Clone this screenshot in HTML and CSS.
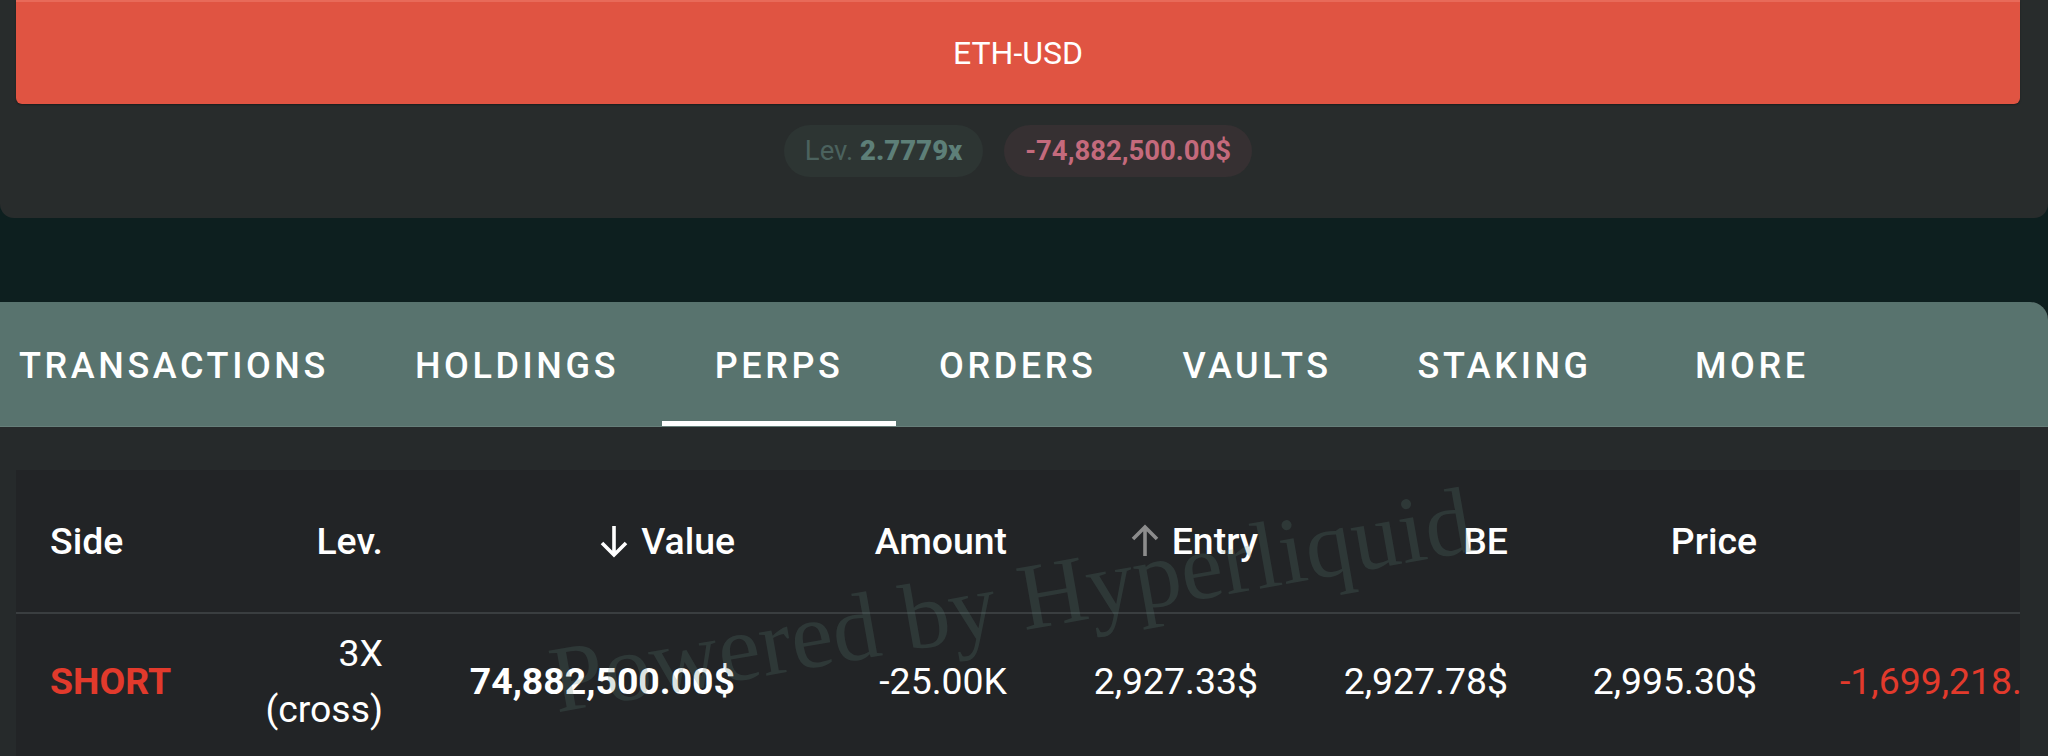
FILE: index.html
```html
<!DOCTYPE html>
<html lang="en">
<head>
<meta charset="utf-8">
<title>Perps</title>
<link rel="stylesheet" href="styles.css">
</head>
<body>
<section class="top-card">
  <button class="eth-btn">ETH-USD</button>
  <div class="pills">
    <span class="pill pill-lev"><span class="lev-label">Lev.</span> <b>2.7779x</b></span>
    <span class="pill pill-val">-74,882,500.00$</span>
  </div>
</section>

<section class="panel">
  <nav class="tabs">
    <div class="tab">TRANSACTIONS</div>
    <div class="tab">HOLDINGS</div>
    <div class="tab active">PERPS</div>
    <div class="tab">ORDERS</div>
    <div class="tab">VAULTS</div>
    <div class="tab">STAKING</div>
    <div class="tab">MORE</div>
  </nav>

  <div class="table-card">
    <div class="row head">
      <div class="cell left">Side</div>
      <div class="cell">Lev.</div>
      <div class="cell"><svg class="arrow" viewBox="0 0 34 36" width="34" height="36"><path d="M17 3 V32 M5 20 L17 32 L29 20" fill="none" stroke="#ffffff" stroke-width="3.6"/></svg>Value</div>
      <div class="cell">Amount</div>
      <div class="cell"><svg class="arrow" viewBox="0 0 34 36" width="34" height="36"><path d="M17 33 V4 M5 16 L17 4 L29 16" fill="none" stroke="#8c8c8c" stroke-width="3.6"/></svg>Entry</div>
      <div class="cell">BE</div>
      <div class="cell">Price</div>
      <div class="cell">PnL</div>
    </div>
    <div class="row data">
      <div class="cell left short">SHORT</div>
      <div class="cell lev">3X<br>(cross)</div>
      <div class="cell strong">74,882,500.00$</div>
      <div class="cell">-25.00K</div>
      <div class="cell">2,927.33$</div>
      <div class="cell">2,927.78$</div>
      <div class="cell">2,995.30$</div>
      <div class="cell neg">-1,699,218.75$</div>
    </div>
    <div class="watermark">Powered by Hyperliquid</div>
  </div>
</section>
</body>
</html>
```

FILE: styles.css
```css
* { box-sizing: border-box; }

html, body {
  margin: 0;
  padding: 0;
}

body {
  width: 2048px;
  height: 756px;
  overflow: hidden;
  background: #0d1f1f;
  font-family: Roboto, "Noto Sans", "Liberation Sans", sans-serif;
  color: #ffffff;
}

.top-card {
  background: #282c2c;
  padding: 0 28px 41px 16px;
  border-radius: 0 0 14px 14px;
  height: 218px;
}

.eth-btn {
  display: flex;
  align-items: center;
  justify-content: center;
  width: 100%;
  height: 104px;
  border: 0;
  border-top: 2px solid #e86a59;
  border-radius: 0 0 6px 6px;
  background: #e05442;
  color: #ffffff;
  font-family: Roboto, "Liberation Sans", sans-serif;
  font-size: 32px;
  font-weight: 400;
  padding: 0;
  box-shadow: 0 1px 2px rgba(0,0,0,0.35);
}

.pills {
  display: flex;
  justify-content: center;
  gap: 21px;
  margin-top: 21px;
}

.pill {
  height: 52px;
  line-height: 52px;
  padding: 0 21px;
  border-radius: 26px;
  font-size: 27.5px;
  font-weight: 700;
  white-space: nowrap;
}

.pill-lev {
  background: #2d3533;
  color: #5d7f78;
}

.pill-lev .lev-label {
  font-weight: 400;
  color: #4b625e;
}

.pill-val {
  background: #363032;
  color: #c46a7c;
}

.panel {
  margin-top: 84px;
  background: #262a2b;
  border-top-right-radius: 18px;
  overflow: hidden;
  height: 454px;
}

.tabs {
  display: flex;
  height: 125px;
  background: #58736e;
  white-space: nowrap;
  overflow: hidden;
  border-bottom: 1px solid #667f7a;
}

.tabs .tab:first-child {
  margin-left: -24px;
}

.tab {
  flex: none;
  position: relative;
  min-width: 234px;
  padding: 4px 43px 0;
  display: flex;
  align-items: center;
  justify-content: center;
  font-size: 36px;
  font-weight: 500;
  letter-spacing: 3.6px;
  color: #ffffff;
}

.tab.active::after {
  content: "";
  position: absolute;
  left: 0;
  right: 0;
  bottom: 0;
  height: 5px;
  background: #ffffff;
}

.table-card {
  position: relative;
  margin: 43px 28px 0 16px;
  background: #222426;
  height: 300px;
  overflow: hidden;
}

.row {
  display: grid;
  grid-template-columns: 150px 183px 352px 272px 251px 250px 249px 328px;
  padding-left: 34px;
  position: relative;
  z-index: 1;
}

.row.head {
  height: 144px;
  align-items: center;
  border-bottom: 2px solid #3a3e40;
  font-size: 37.4px;
  font-weight: 500;
}

.row.data {
  padding-top: 11px;
  align-items: center;
  font-size: 37.4px;
  font-weight: 400;
  line-height: 56px;
}

.cell {
  text-align: right;
  white-space: nowrap;
  display: flex;
  align-items: center;
  justify-content: flex-end;
}

.cell.left {
  justify-content: flex-start;
}

.cell.lev {
  display: block;
  text-align: right;
}

.arrow {
  margin-right: 10px;
}

.short {
  color: #e23a2c;
  font-weight: 700;
}

.strong {
  font-weight: 700;
}

.neg {
  color: #e23a2c;
}

.watermark {
  position: absolute;
  left: 995px;
  top: 130px;
  transform: translate(-50%, -50%) rotate(-10deg);
  font-family: "Liberation Serif", "DejaVu Serif", serif;
  font-size: 95px;
  color: rgba(92, 128, 120, 0.22);
  white-space: nowrap;
  z-index: 2;
  pointer-events: none;
}
```
